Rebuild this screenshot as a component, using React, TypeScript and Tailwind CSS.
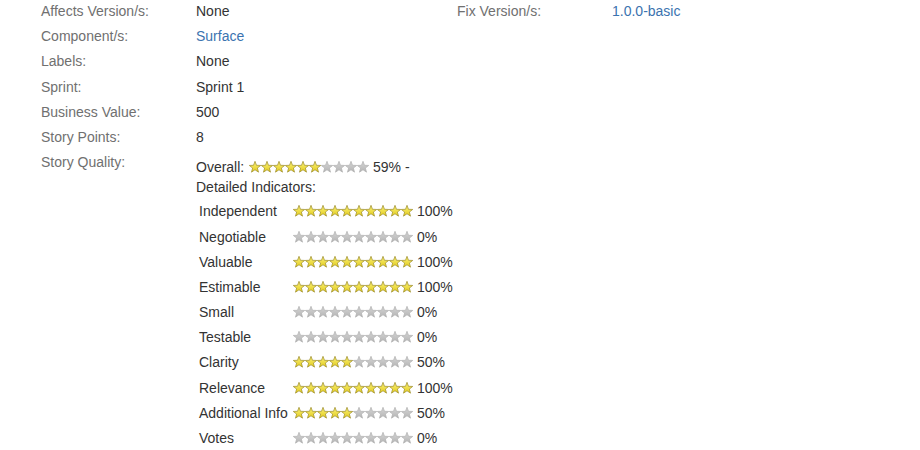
import React from "react";

const STAR = "6,0.3 7.47,4.28 11.71,4.45 8.38,7.07 9.53,11.15 6,8.8 2.47,11.15 3.62,7.07 0.29,4.45 4.53,4.28";

function Stars({ filled }: { filled: number }) {
  return (
    <span className="inline-flex align-[-1px]">
      {Array.from({ length: 10 }).map((_, i) => {
        const on = i < filled;
        return (
          <svg key={i} width="12" height="12" viewBox="0 0 12 12" className="block">
            <defs>
              <linearGradient id="gy" x1="0" y1="0" x2="0" y2="1">
                <stop offset="0" stopColor="#fbf27a" />
                <stop offset="1" stopColor="#e2cb1c" />
              </linearGradient>
              <linearGradient id="gg" x1="0" y1="0" x2="0" y2="1">
                <stop offset="0" stopColor="#d6d6d6" />
                <stop offset="1" stopColor="#b4b4b4" />
              </linearGradient>
            </defs>
            <polygon
              points={STAR}
              fill={on ? "url(#gy)" : "url(#gg)"}
              stroke={on ? "#9a8a2a" : "#b0b0b0"}
              strokeWidth="0.7"
              strokeLinejoin="round"
            />
          </svg>
        );
      })}
    </span>
  );
}

const rows: [string, React.ReactNode][] = [
  ["Affects Version/s:", "None"],
  ["Component/s:", <a className="text-[#3b73af]">Surface</a>],
  ["Labels:", "None"],
  ["Sprint:", "Sprint 1"],
  ["Business Value:", "500"],
  ["Story Points:", "8"],
];

const indicators: [string, number][] = [
  ["Independent", 100],
  ["Negotiable", 0],
  ["Valuable", 100],
  ["Estimable", 100],
  ["Small", 0],
  ["Testable", 0],
  ["Clarity", 50],
  ["Relevance", 100],
  ["Additional Info", 50],
  ["Votes", 0],
];

export default function App() {
  return (
    <div
      className="w-[920px] h-[450px] bg-white overflow-hidden text-[14px] leading-[20px] text-[#333]"
      style={{ fontFamily: '"Liberation Sans", Arial, sans-serif' }}
    >
      <div className="flex mt-[-1.5px]">
        <div className="w-[457px] pl-[41px] shrink-0">
          {rows.map(([l, v], i) => (
            <div key={i} className="flex py-[2.6px]">
              <div className="w-[155px] text-[#707070]">{l}</div>
              <div>{v}</div>
            </div>
          ))}
          <div className="flex pt-[2.6px]">
            <div className="w-[155px] text-[#707070]">Story Quality:</div>
            <div className="pt-[5px]">
              <div className="flex items-center">
                <span>Overall:&nbsp;</span>
                <span className="ml-[1px] flex">
                  <Stars filled={6} />
                </span>
                <span>&nbsp;59% -</span>
              </div>
              <div>Detailed Indicators:</div>
              <div className="mt-[1.5px]">
                {indicators.map(([n, p]) => (
                  <div key={n} className="flex items-center h-[25.2px]">
                    <div className="w-[97px] pl-[3px] whitespace-nowrap">{n}</div>
                    <div className="flex items-center">
                      <Stars filled={p / 10} />
                      <span>&nbsp;{p}%</span>
                    </div>
                  </div>
                ))}
              </div>
            </div>
          </div>
        </div>
        <div className="flex py-[2.6px]">
          <div className="w-[155px] text-[#707070]">Fix Version/s:</div>
          <div>
            <a className="text-[#3b73af]">1.0.0-basic</a>
          </div>
        </div>
      </div>
    </div>
  );
}
